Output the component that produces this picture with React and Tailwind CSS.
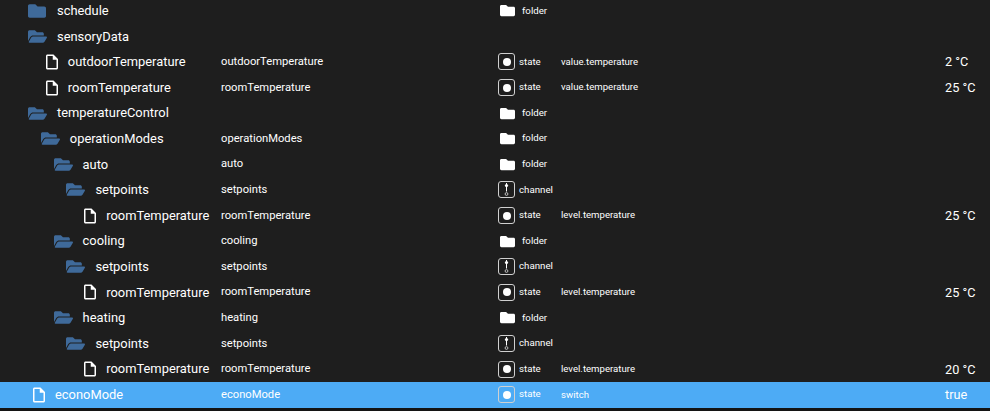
import React from "react";
import { FaFolder, FaFolderOpen } from "react-icons/fa";

const rows = [
  { name: "schedule", level: 0, type: "closed", kind: "folder" },
  { name: "sensoryData", level: 0, type: "open" },
  { name: "outdoorTemperature", id: "outdoorTemperature", level: 1, type: "file", kind: "state", role: "value.temperature", value: "2 °C" },
  { name: "roomTemperature", id: "roomTemperature", level: 1, type: "file", kind: "state", role: "value.temperature", value: "25 °C" },
  { name: "temperatureControl", level: 0, type: "open", kind: "folder" },
  { name: "operationModes", id: "operationModes", level: 1, type: "open", kind: "folder" },
  { name: "auto", id: "auto", level: 2, type: "open", kind: "folder" },
  { name: "setpoints", id: "setpoints", level: 3, type: "open", kind: "channel" },
  { name: "roomTemperature", id: "roomTemperature", level: 4, type: "file", kind: "state", role: "level.temperature", value: "25 °C" },
  { name: "cooling", id: "cooling", level: 2, type: "open", kind: "folder" },
  { name: "setpoints", id: "setpoints", level: 3, type: "open", kind: "channel" },
  { name: "roomTemperature", id: "roomTemperature", level: 4, type: "file", kind: "state", role: "level.temperature", value: "25 °C" },
  { name: "heating", id: "heating", level: 2, type: "open", kind: "folder" },
  { name: "setpoints", id: "setpoints", level: 3, type: "open", kind: "channel" },
  { name: "roomTemperature", id: "roomTemperature", level: 4, type: "file", kind: "state", role: "level.temperature", value: "20 °C" },
  { name: "econoMode", id: "econoMode", level: 0, type: "file", kind: "state", role: "switch", value: "true", selected: true },
];

const FileIcon = () => (
  <svg viewBox="0 0 24 24" className="mr-[7px] h-[18px] w-[18px] shrink-0 fill-current text-white">
    <path d="M14 2H6c-1.1 0-2 .9-2 2v16c0 1.1.9 2 2 2h12c1.1 0 2-.9 2-2V8l-6-6zM6 20V4h7v5h5v11H6z" />
  </svg>
);

const KindIcon = ({ kind }) => {
  if (kind === "folder") {
    return <FaFolder className="ml-[2px] mr-[3px] h-[15px] w-[15px] text-white" />;
  }
  return (
    <div className="flex h-[17px] w-[17px] items-center justify-center rounded-[3px] border border-[#d0d0d0]">
      {kind === "state" ? (
        <div className="h-[8px] w-[8px] rounded-full bg-white" />
      ) : (
        <svg viewBox="0 0 15 15" className="h-[15px] w-[15px]">
          <path d="M7.5 1v8.5" stroke="#fff" strokeWidth="1" />
          <circle cx="7.5" cy="3.5" r="1.6" fill="#fff" />
          <circle cx="7.5" cy="12" r="1.4" fill="none" stroke="#ccc" strokeWidth="0.9" />
        </svg>
      )}
    </div>
  );
};

const Row = ({ row }) => {
  const isFile = row.type === "file";
  return (
    <div className={`flex h-[25.6px] shrink-0 items-center text-white ${row.selected ? "bg-[#4dabf5]" : ""}`}>
      <div
        className="flex w-[221px] shrink-0 items-center text-[12.9px]"
        style={{ paddingLeft: (isFile ? 30 : 28) + row.level * 12.8 }}
      >
        {isFile ? (
          <FileIcon />
        ) : row.type === "open" ? (
          <FaFolderOpen className="mr-[10px] h-[19px] w-[19px] shrink-0 text-[#3f6a9a]" />
        ) : (
          <FaFolder className="mr-[11px] h-[18px] w-[18px] shrink-0 text-[#3f6a9a]" />
        )}
        <span className="whitespace-nowrap">{row.name}</span>
      </div>
      <div className="w-[277px] shrink-0 whitespace-nowrap pt-[1px] text-[11.2px]">{row.id}</div>
      <div className="flex w-[63px] shrink-0 items-center gap-[4px] text-[9.7px]">
        {row.kind && <KindIcon kind={row.kind} />}
        <span>{row.kind}</span>
      </div>
      <div className="w-[384px] shrink-0 whitespace-nowrap text-[9.6px]">{row.role}</div>
      <div className="whitespace-nowrap text-[12.7px]">{row.value}</div>
    </div>
  );
};

export default function App() {
  return (
    <div className="flex h-[411px] flex-col overflow-hidden bg-[#1e1e1e] font-['Roboto','Noto_Sans',sans-serif]">
      <div className="-mt-[2px] shrink-0">
        {rows.map((row, i) => (
          <Row key={i} row={row} />
        ))}
      </div>
      <div className="flex-1 bg-[#141414]" />
    </div>
  );
}
